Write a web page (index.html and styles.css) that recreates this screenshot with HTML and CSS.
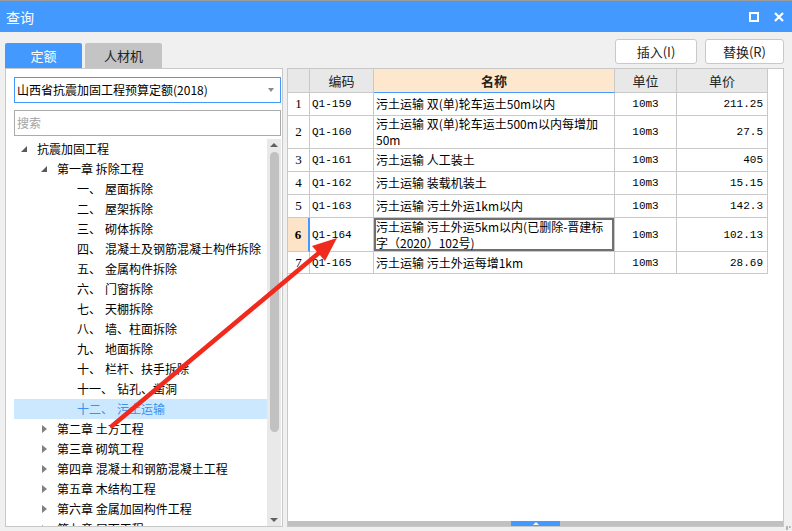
FILE: index.html
```html
<!DOCTYPE html>
<html lang="zh-CN">
<head>
<meta charset="utf-8">
<title>查询</title>
<link rel="stylesheet" href="styles.css">
</head>
<body>
<div class="window">
  <div class="titlebar">
    <div class="title">查询</div>
    <div class="title-icons">
      <svg class="ico" width="10" height="10" viewBox="0 0 10 10"><rect x="1" y="1" width="8" height="8" fill="none" stroke="#fff" stroke-width="2"/></svg>
      <svg class="ico" width="10" height="10" viewBox="0 0 10 10"><path d="M1 1 L9 9 M9 1 L1 9" stroke="#fff" stroke-width="2.2" fill="none"/></svg>
    </div>
  </div>

  <div class="toolbar">
    <div class="tab active">定额</div>
    <div class="tab">人材机</div>
    <div class="spacer"></div>
    <div class="btn btn-insert">插入(I)</div>
    <div class="btn btn-replace">替换(R)</div>
  </div>

  <div class="panes">
    <div class="left">
      <div class="select"><span class="select-text">山西省抗震加固工程预算定额(2018)</span><i class="caret"></i></div>
      <div class="search">搜索</div>
      <div class="tree-wrap">
        <div class="tree">
          <div class="row l0"><i class="tri-open"></i><span>抗震加固工程</span></div>
          <div class="row l1"><i class="tri-open"></i><span>第一章 拆除工程</span></div>
          <div class="row l2"><span class="num">一、</span><span>屋面拆除</span></div>
          <div class="row l2"><span class="num">二、</span><span>屋架拆除</span></div>
          <div class="row l2"><span class="num">三、</span><span>砌体拆除</span></div>
          <div class="row l2"><span class="num">四、</span><span>混凝土及钢筋混凝土构件拆除</span></div>
          <div class="row l2"><span class="num">五、</span><span>金属构件拆除</span></div>
          <div class="row l2"><span class="num">六、</span><span>门窗拆除</span></div>
          <div class="row l2"><span class="num">七、</span><span>天棚拆除</span></div>
          <div class="row l2"><span class="num">八、</span><span>墙、柱面拆除</span></div>
          <div class="row l2"><span class="num">九、</span><span>地面拆除</span></div>
          <div class="row l2"><span class="num">十、</span><span>栏杆、扶手拆除</span></div>
          <div class="row l2"><span class="num">十一、</span><span>钻孔、凿洞</span></div>
          <div class="row l2 sel"><span class="num">十二、</span><span>污土运输</span></div>
          <div class="row l1"><i class="tri-closed"></i><span>第二章 土方工程</span></div>
          <div class="row l1"><i class="tri-closed"></i><span>第三章 砌筑工程</span></div>
          <div class="row l1"><i class="tri-closed"></i><span>第四章 混凝土和钢筋混凝土工程</span></div>
          <div class="row l1"><i class="tri-closed"></i><span>第五章 木结构工程</span></div>
          <div class="row l1"><i class="tri-closed"></i><span>第六章 金属加固构件工程</span></div>
          <div class="row l1"><i class="tri-closed"></i><span>第七章 屋面工程</span></div>
        </div>
        <div class="vscroll">
          <div class="arr-up"><i></i></div>
          <div class="thumb"></div>
          <div class="vspace"></div>
          <div class="arr-down"><i></i></div>
        </div>
      </div>
    </div>

    <div class="right">
      <div class="grid">
        <div class="c h"></div>
        <div class="c h">编码</div>
        <div class="c h hname">名称</div>
        <div class="c h">单位</div>
        <div class="c h">单价</div>

        <div class="c rn">1</div>
        <div class="c code">Q1-159</div>
        <div class="c name">污土运输 双(单)轮车运土50m以内</div>
        <div class="c unit">10m3</div>
        <div class="c price">211.25</div>

        <div class="c rn">2</div>
        <div class="c code">Q1-160</div>
        <div class="c name">污土运输 双(单)轮车运土500m以内每增加<br>50m</div>
        <div class="c unit">10m3</div>
        <div class="c price">27.5</div>

        <div class="c rn">3</div>
        <div class="c code">Q1-161</div>
        <div class="c name">污土运输 人工装土</div>
        <div class="c unit">10m3</div>
        <div class="c price">405</div>

        <div class="c rn">4</div>
        <div class="c code">Q1-162</div>
        <div class="c name">污土运输 装载机装土</div>
        <div class="c unit">10m3</div>
        <div class="c price">15.15</div>

        <div class="c rn">5</div>
        <div class="c code">Q1-163</div>
        <div class="c name">污土运输 污土外运1km以内</div>
        <div class="c unit">10m3</div>
        <div class="c price">142.3</div>

        <div class="c rn rn-sel">6</div>
        <div class="c code">Q1-164</div>
        <div class="c name name-sel">污土运输 污土外运5km以内(已删除-晋建标<br>字（2020）102号)</div>
        <div class="c unit">10m3</div>
        <div class="c price">102.13</div>

        <div class="c rn">7</div>
        <div class="c code">Q1-165</div>
        <div class="c name">污土运输 污土外运每增1km</div>
        <div class="c unit">10m3</div>
        <div class="c price">28.69</div>
      </div>
      <div class="fill"></div>
      <div class="hscroll"><div class="hthumb"><i></i></div></div>
    </div>
  </div>

  <svg class="arrow" width="792" height="531" viewBox="0 0 792 531">
    <line x1="112" y1="426" x2="320" y2="252" stroke="#f02a1c" stroke-width="4.5" stroke-linecap="round"/>
    <polygon points="337,238 325,261 312,246" fill="#f02a1c"/>
  </svg>
  <div class="grip"></div>
</div>
</body>
</html>
```

FILE: styles.css
```css
* { box-sizing: border-box; }
html, body { margin: 0; padding: 0; }
body {
  font-family: "Noto Sans CJK SC", "Liberation Sans", sans-serif;
  font-size: 12px;
  color: #000;
  background: #f0f0f0;
}
.window {
  position: relative;
  width: 792px;
  height: 531px;
  overflow: hidden;
  background: #f0f0f0;
  display: flex;
  flex-direction: column;
}

/* title bar */
.titlebar {
  height: 32px;
  flex: none;
  border-top: 1px solid #9c9c9c;
  background: #4499ff;
  color: #fff;
  display: flex;
  align-items: center;
  padding: 0 8px 0 6px;
}
.title { flex: 1; font-size: 14px; line-height: 20px; }
.title-icons { display: flex; align-items: center; gap: 15px; }
.ico { display: block; }

/* toolbar */
.toolbar {
  height: 36px;
  flex: none;
  display: flex;
  align-items: flex-end;
  padding: 0 8px 0 5px;
}
.tab {
  width: 77px;
  height: 25px;
  margin-right: 3px;
  border-radius: 2px 2px 0 0;
  background: #c4c4c4;
  color: #222;
  font-size: 13px;
  line-height: 25px;
  text-align: center;
}
.tab.active { background: #4499ff; color: #fff; }
.spacer { flex: 1; }
.btn {
  height: 25px;
  margin-bottom: 4px;
  background: #fff;
  border: 1px solid #c9c9c9;
  border-radius: 3px;
  font-size: 13px;
  line-height: 23px;
  text-align: center;
  color: #222;
}
.btn-insert { width: 82px; }
.btn-replace { width: 79px; margin-left: 8px; }

/* panes */
.panes {
  height: 459px;
  flex: none;
  display: flex;
}
.left {
  margin-left: 5px;
  width: 278px;
  border: 1px solid #c8c8c8;
  background: #fff;
  padding: 8px 1px 0 8px;
  display: flex;
  flex-direction: column;
}
.select {
  height: 26px;
  flex: none;
  border: 1px solid #4499ff;
  display: flex;
  align-items: center;
  padding: 0 6px 0 2px;
}
.select-text { flex: 1; line-height: 20px; white-space: nowrap; }
.caret {
  width: 0; height: 0;
  border-top: 4px solid #8a8a8a;
  border-left: 3px solid transparent;
  border-right: 3px solid transparent;
}
.search {
  margin-top: 7px;
  height: 26px;
  flex: none;
  border: 1px solid #ababab;
  color: #a3a3a3;
  padding-left: 2px;
  line-height: 24px;
}
.tree-wrap {
  margin-top: 3px;
  flex: 1;
  min-height: 0;
  display: flex;
}
.tree { width: 253px; overflow: hidden; }
.row {
  height: 20px;
  display: flex;
  align-items: center;
  white-space: nowrap;
  line-height: 20px;
}
.l0 { padding-left: 7px; }
.l1 { padding-left: 27px; }
.l2 { padding-left: 63px; }
.num { margin-right: 4px; }
.row.sel { background: #cce8ff; color: #3d8ff0; }
.tri-open {
  width: 0; height: 0;
  border-left: 6px solid transparent;
  border-bottom: 6px solid #595959;
  margin-right: 10px;
}
.tri-closed {
  width: 0; height: 0;
  margin-left: 1px;
  border-left: 5px solid #808080;
  border-top: 4px solid transparent;
  border-bottom: 4px solid transparent;
  margin-right: 10px;
}
.vscroll {
  width: 14px;
  background: #e9e9e9;
  display: flex;
  flex-direction: column;
  align-items: center;
}
.arr-up, .arr-down {
  height: 12px;
  width: 14px;
  display: flex;
  align-items: center;
  justify-content: center;
  flex: none;
}
.arr-up i {
  width: 0; height: 0;
  border-bottom: 4px solid #606060;
  border-left: 4px solid transparent;
  border-right: 4px solid transparent;
}
.arr-down i {
  width: 0; height: 0;
  border-top: 4px solid #606060;
  border-left: 4px solid transparent;
  border-right: 4px solid transparent;
}
.thumb {
  margin-top: 1px;
  width: 9px;
  height: 280px;
  border-radius: 5px;
  background: #c1c1c1;
  flex: none;
}
.vspace { flex: 1; }

/* right pane / grid */
.right {
  margin-left: 4px;
  width: 497px;
  border: 1px solid #c8c8c8;
  background: #fff;
  display: flex;
  flex-direction: column;
}
.grid {
  display: grid;
  width: 480px;
  grid-template-columns: 22px 64px 241px 62px 91px;
  grid-template-rows: 24px 23px 33px 23px 23px 23px 34px 22px;
}
.c {
  border-right: 1px solid #c9c9c9;
  border-bottom: 1px solid #c9c9c9;
  display: flex;
  align-items: center;
  overflow: hidden;
  white-space: nowrap;
}
.h {
  background: #e8e8e8;
  justify-content: center;
  font-size: 13px;
  color: #222;
}
.hname {
  background: #fde8cd;
  font-weight: bold;
  border-bottom-color: #4499ff;
}
.rn {
  justify-content: center;
  font-family: "Liberation Serif", serif;
  font-size: 13px;
}
.rn-sel {
  background: #fde4c8;
  font-weight: bold;
  border-right: 2px solid #4499ff;
}
.code {
  font-family: "Liberation Mono", monospace;
  font-size: 11px;
  padding-left: 2px;
}
.name {
  padding-left: 2px;
  line-height: 16px;
}
.name-sel { box-shadow: inset 0 0 0 2px #707070; }
.unit {
  justify-content: center;
  font-family: "Liberation Mono", monospace;
  font-size: 11px;
}
.price {
  justify-content: flex-end;
  padding-right: 4px;
  font-family: "Liberation Mono", monospace;
  font-size: 11px;
}
.fill { flex: 1; }
.hscroll {
  height: 5px;
  flex: none;
  background: #c0c0c0;
  display: flex;
}
.hthumb {
  margin-left: 223px;
  width: 49px;
  height: 5px;
  background: #4499ff;
  display: flex;
  align-items: center;
  justify-content: center;
}
.hthumb i {
  width: 0; height: 0;
  border-bottom: 3px solid #fff;
  border-left: 3px solid transparent;
  border-right: 3px solid transparent;
}

/* overlays */
.arrow {
  position: absolute;
  left: 0;
  top: 0;
  pointer-events: none;
}
.grip {
  position: absolute;
  right: 1px;
  bottom: 1px;
  width: 5px;
  height: 4px;
  border-top: 2px dotted #9a9a9a;
  border-left: 2px dotted #9a9a9a;
  opacity: 0.7;
}
```
